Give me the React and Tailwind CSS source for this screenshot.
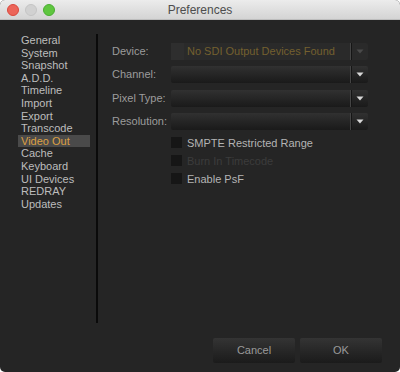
import React from 'react';

const pages = [
  'General', 'System', 'Snapshot', 'A.D.D.', 'Timeline', 'Import', 'Export',
  'Transcode', 'Video Out', 'Cache', 'Keyboard', 'UI Devices', 'REDRAY', 'Updates',
];

const Arrow = ({ dim }) => (
  <svg width="8" height="5" viewBox="0 0 8 5" className="block">
    <path d="M0.5 0.5 H7.5 L4 4.5 Z" fill={dim ? '#4a4a4a' : '#d8d8d8'} />
  </svg>
);

const Dropdown = ({ text, disabled }) => (
  <div
    className={`flex h-[17px] w-[197px] items-stretch rounded-[2px] ${
      disabled ? 'bg-[#2a2a2a]' : 'bg-gradient-to-b from-[#313131] to-[#1a1a1a]'
    }`}
  >
    <div className="flex flex-1 items-center">
      {disabled && <div className="h-full w-[13px] bg-[#2e2e2e]" />}
      {text && <span className="pl-[3px] text-[11px] leading-[17px] text-[#74602f]">{text}</span>}
    </div>
    <div className="w-px bg-[#444]" />
    <div className="w-px bg-[#151515]" />
    <div className="flex w-[16px] items-center justify-center">
      <Arrow dim={disabled} />
    </div>
  </div>
);

const Check = ({ label, dim }) => (
  <div className="flex h-[18px] items-center gap-[5px]">
    <div className="h-[11px] w-[11px] bg-[#161616]" />
    <span className={`text-[11px] leading-[18px] ${dim ? 'text-[#3c3c3c]' : 'text-[#b4b4b4]'}`}>{label}</span>
  </div>
);

export default function App() {
  return (
    <div className="h-[372px] w-[400px] bg-white" style={{ fontFamily: '"Liberation Sans", Arial, sans-serif' }}>
      <div className="flex h-full w-full flex-col overflow-hidden rounded-[5px] bg-[#252525]">
        {/* title bar */}
        <div className="relative flex h-[20px] items-center justify-center border-b border-[#bdbdbd] bg-gradient-to-b from-[#ececec] to-[#d4d4d4]">
          <div className="absolute left-[7px] top-[4px] flex gap-[6px]">
            <div className="h-[12px] w-[12px] rounded-full border border-[#d9483d] bg-[#ec6559]" />
            <div className="h-[12px] w-[12px] rounded-full border border-[#c4c4c4] bg-[#d1d1d1]" />
            <div className="h-[12px] w-[12px] rounded-full border border-[#4aad32] bg-[#5fc63f]" />
          </div>
          <span className="text-[12px] leading-[20px] text-[#4d4d4d]">Preferences</span>
        </div>

        <div className="flex flex-1">
          {/* page list */}
          <div className="w-[96px] pl-[18px] pt-[14px]">
            {pages.map((p) => (
              <div
                key={p}
                className={`w-[72px] pl-[3px] text-[11px] leading-[12.6px] ${
                  p === 'Video Out' ? 'bg-[#4a4a4a] text-[#dca043]' : 'text-[#bdbdbd]'
                }`}
              >
                {p}
              </div>
            ))}
          </div>

          <div className="mt-[14px] h-[289px] w-[2px] bg-[#0a0a0a]" />

          {/* settings */}
          <div className="flex flex-1 flex-col pb-[9px] pl-[14px] pr-[18px] pt-[23px]">
            <div className="flex flex-col gap-[6.3px]">
              {[
                ['Device:', <Dropdown key="d" text="No SDI Output Devices Found" disabled />],
                ['Channel:', <Dropdown key="c" />],
                ['Pixel Type:', <Dropdown key="p" />],
                ['Resolution:', <Dropdown key="r" />],
              ].map(([label, control]) => (
                <div key={label} className="flex h-[17px] items-center">
                  <span className="w-[59px] text-[11px] leading-[17px] text-[#9c9c9c]">{label}</span>
                  {control}
                </div>
              ))}
            </div>

            <div className="ml-[59px] mt-[4px] flex flex-col">
              <Check label="SMPTE Restricted Range" />
              <Check label="Burn In Timecode" dim />
              <Check label="Enable PsF" />
            </div>

            <div className="mt-auto flex justify-end gap-[5px]">
              <button className="h-[25px] w-[82px] rounded-[2px] bg-gradient-to-b from-[#343434] to-[#1b1b1b] text-[11px] text-[#9a9a9a]">
                Cancel
              </button>
              <button className="h-[25px] w-[82px] rounded-[2px] bg-gradient-to-b from-[#343434] to-[#1b1b1b] text-[11px] text-[#9a9a9a]">
                OK
              </button>
            </div>
          </div>
        </div>
      </div>
    </div>
  );
}
